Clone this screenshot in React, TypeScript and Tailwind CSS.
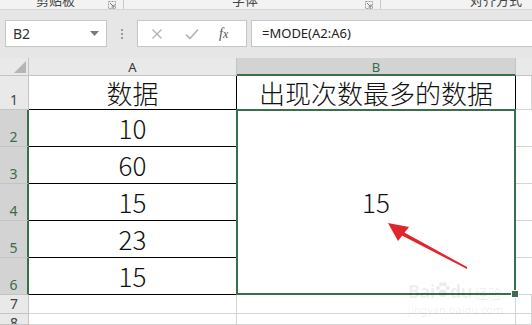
import React from 'react';

const cjk = { fontFamily: '"Noto Sans CJK SC", "Noto Sans", sans-serif' };
const ui = { fontFamily: '"Noto Sans", "Noto Sans CJK SC", sans-serif' };

function Launcher() {
  return (
    <svg width="8" height="8" viewBox="0 0 8 8" className="mt-[1px]">
      <path d="M0.5 0.5 H7.5 V7.5 H0.5 Z" fill="none" stroke="#9a9a9a" strokeWidth="1" strokeDasharray="2 1" />
      <path d="M2 2 L6 6 M6 3.5 V6 H3.5" fill="none" stroke="#777" strokeWidth="1" />
    </svg>
  );
}

function RowHead({ n, row, selected, top }: { n: number; row: number; selected?: boolean; top?: boolean }) {
  return (
    <div
      className={
        'col-start-1 flex justify-center overflow-hidden text-[14px] leading-[16px] border-b border-[#c3c3c3] ' +
        (top ? 'items-start pt-[1px] ' : 'items-end pb-[1px] ') +
        (selected
          ? 'bg-[#d3d3d3] text-[#3b6a4b] border-r-2 border-r-[#3b6e4d]'
          : 'bg-[#e9e9e9] text-[#444] border-r border-r-[#c3c3c3]')
      }
      style={{ ...ui, gridRow: row }}
    >
      {n}
    </div>
  );
}

function DataCell({ children, className = '', style }: { children?: React.ReactNode; className?: string; style?: React.CSSProperties }) {
  return (
    <div
      className={
        'bg-white border-r border-b border-black flex items-end justify-center text-[26px] leading-none font-light text-[#111] whitespace-nowrap ' +
        className
      }
      style={{ ...cjk, ...style }}
    >
      {children}
    </div>
  );
}

function Blank({ row, col }: { row: number; col: number }) {
  return <div className="bg-white border-r border-b border-[#d4d4d4]" style={{ gridRow: row, gridColumn: col }} />;
}

export default function App() {
  const values = ['10', '60', '15', '23', '15'];
  return (
    <div className="w-[532px] h-[325px] bg-[#e6e6e6] relative overflow-hidden">
      {/* ribbon group labels (cut off) */}
      <div className="h-[10px] bg-[#f3f3f3] border-b border-[#d6d6d6] flex overflow-hidden text-[13px] text-[#444]" style={cjk}>
        <div className="w-[124px] flex">
          <span className="-mt-[8px] leading-[16px] ml-[36px] mr-auto">剪贴板</span>
          <div className="mr-[7px]"><Launcher /></div>
          <div className="w-px h-full bg-[#c9c9c9]" />
        </div>
        <div className="w-[257px] flex">
          <span className="-mt-[8px] leading-[16px] ml-[108px] mr-auto">字体</span>
          <div className="mr-[7px]"><Launcher /></div>
          <div className="w-px h-full bg-[#c9c9c9]" />
        </div>
        <div className="flex-1 flex">
          <span className="-mt-[8px] leading-[16px] ml-[89px] whitespace-nowrap">对齐方式</span>
        </div>
      </div>

      {/* formula bar */}
      <div className="h-[48px] pt-[10px] flex">
        <div className="ml-[5px] w-[102px] h-[27px] bg-white border border-[#c6c6c6] flex items-center px-[7px]">
          <span className="text-[14px] text-[#333] flex-1" style={ui}>B2</span>
          <svg width="9" height="5" viewBox="0 0 9 5"><path d="M0 0 H9 L4.5 5 Z" fill="#7a7a7a" /></svg>
        </div>
        <div className="w-[30px] h-[27px] flex flex-col items-center justify-center gap-[2px]">
          <span className="w-[2px] h-[2px] bg-[#9a9a9a]" />
          <span className="w-[2px] h-[2px] bg-[#9a9a9a]" />
          <span className="w-[2px] h-[2px] bg-[#9a9a9a]" />
        </div>
        <div className="w-[110px] h-[27px] bg-white border border-[#c6c6c6] flex items-center">
          <svg width="12" height="12" viewBox="0 0 12 12" className="ml-[13px]">
            <path d="M1.5 1.5 L10.5 10.5 M10.5 1.5 L1.5 10.5" stroke="#b3b3b3" strokeWidth="1.4" />
          </svg>
          <svg width="14" height="12" viewBox="0 0 14 12" className="ml-[22px]">
            <path d="M1 6.5 L5 10.5 L13 1.5" fill="none" stroke="#b3b3b3" strokeWidth="1.6" />
          </svg>
          <span className="ml-[20px] text-[14px] italic text-[#555]" style={{ fontFamily: '"Liberation Serif", serif' }}>
            f<span className="text-[12px]">x</span>
          </span>
        </div>
        <div className="ml-[4px] flex-1 h-[27px] bg-white border border-r-0 border-[#c6c6c6] flex items-center pl-[10px]">
          <span className="text-[13px] text-[#222]" style={ui}>=MODE(A2:A6)</span>
        </div>
      </div>

      {/* sheet grid */}
      <div className="grid grid-cols-[29px_208px_279px_16px] grid-rows-[18px_34px_37px_37px_37px_37px_37px_19px_11px]">
        {/* header row */}
        <div className="bg-[#e9e9e9] border-r border-b border-[#c3c3c3] flex items-end justify-end p-[2px]">
          <svg width="12" height="12" viewBox="0 0 12 12"><path d="M12 0 V12 H0 Z" fill="#b5b5b5" /></svg>
        </div>
        <div className="bg-[#e9e9e9] border-r border-b border-[#c3c3c3] flex items-end justify-center text-[13px] leading-[15px] text-[#333]" style={ui}>A</div>
        <div className="bg-[#d3d3d3] border-r border-r-[#c3c3c3] border-b-2 border-b-[#3b6e4d] flex items-end justify-center text-[13px] leading-[14px] text-[#3b6a4b]" style={ui}>B</div>
        <div className="bg-[#e9e9e9] border-b border-[#c3c3c3]" />

        {/* row 1 */}
        <RowHead n={1} row={2} />
        <DataCell className="pb-[3px]" style={{ gridRow: 2, gridColumn: 2 }}>数据</DataCell>
        <DataCell className="pb-[3px]" style={{ gridRow: 2, gridColumn: 3 }}>出现次数最多的数据</DataCell>
        <Blank row={2} col={4} />

        {/* rows 2-6 */}
        {values.map((v, i) => (
          <React.Fragment key={i}>
            <RowHead n={i + 2} row={i + 3} selected />
            <DataCell className="pb-[5px]" style={{ gridRow: i + 3, gridColumn: 2 }}>{v}</DataCell>
            <div className="bg-white border-b border-[#d4d4d4]" style={{ gridRow: i + 3, gridColumn: 4 }} />
          </React.Fragment>
        ))}
        <div className="col-start-3 row-start-3 row-span-5 relative bg-white border-r border-b border-black flex items-center justify-center">
          <span className="text-[26px] leading-none font-light text-[#111]" style={cjk}>15</span>
          <div className="absolute -left-[1px] -top-[1px] -right-[1px] -bottom-[1px] border-2 border-[#3b6e4d]" />
          <div className="absolute -right-[3px] -bottom-[3px] w-[6px] h-[6px] bg-[#3b6e4d] outline outline-1 outline-white" />
        </div>

        {/* rows 7-8 */}
        <RowHead n={7} row={8} />
        <Blank row={8} col={2} />
        <Blank row={8} col={3} />
        <Blank row={8} col={4} />
        <RowHead n={8} row={9} top />
        <Blank row={9} col={2} />
        <Blank row={9} col={3} />
        <Blank row={9} col={4} />
      </div>

      {/* annotation arrow */}
      <svg className="absolute left-0 top-0 pointer-events-none" width="532" height="325" viewBox="0 0 532 325">
        <polygon points="398,229 401,235 467,269 467,267" fill="#e0262a" />
        <polygon points="388,223 409,227 398,241" fill="#e0262a" />
      </svg>

      {/* watermark */}
      <div className="absolute left-[408px] top-[281px] pointer-events-none whitespace-nowrap text-[#000]/[0.08]" style={ui}>
        <div className="flex items-end leading-none">
          <span className="text-[18px] font-bold tracking-tight">Bai</span>
          <svg width="15" height="17" viewBox="0 0 20 22" className="mb-[2px]">
            <g fill="rgba(0,0,0,0.08)">
              <ellipse cx="4" cy="9" rx="2.5" ry="3" />
              <ellipse cx="8" cy="4" rx="2.5" ry="3" />
              <ellipse cx="13" cy="4" rx="2.5" ry="3" />
              <ellipse cx="17" cy="9" rx="2.5" ry="3" />
              <ellipse cx="10.5" cy="16" rx="6" ry="5" />
            </g>
          </svg>
          <span className="text-[18px] font-bold tracking-tight">du</span>
          <span className="text-[14px] ml-[2px]" style={cjk}>经验</span>
        </div>
        <div className="text-[11px] leading-[13px] mt-[3px]">jingyan.baidu.com</div>
      </div>
    </div>
  );
}
